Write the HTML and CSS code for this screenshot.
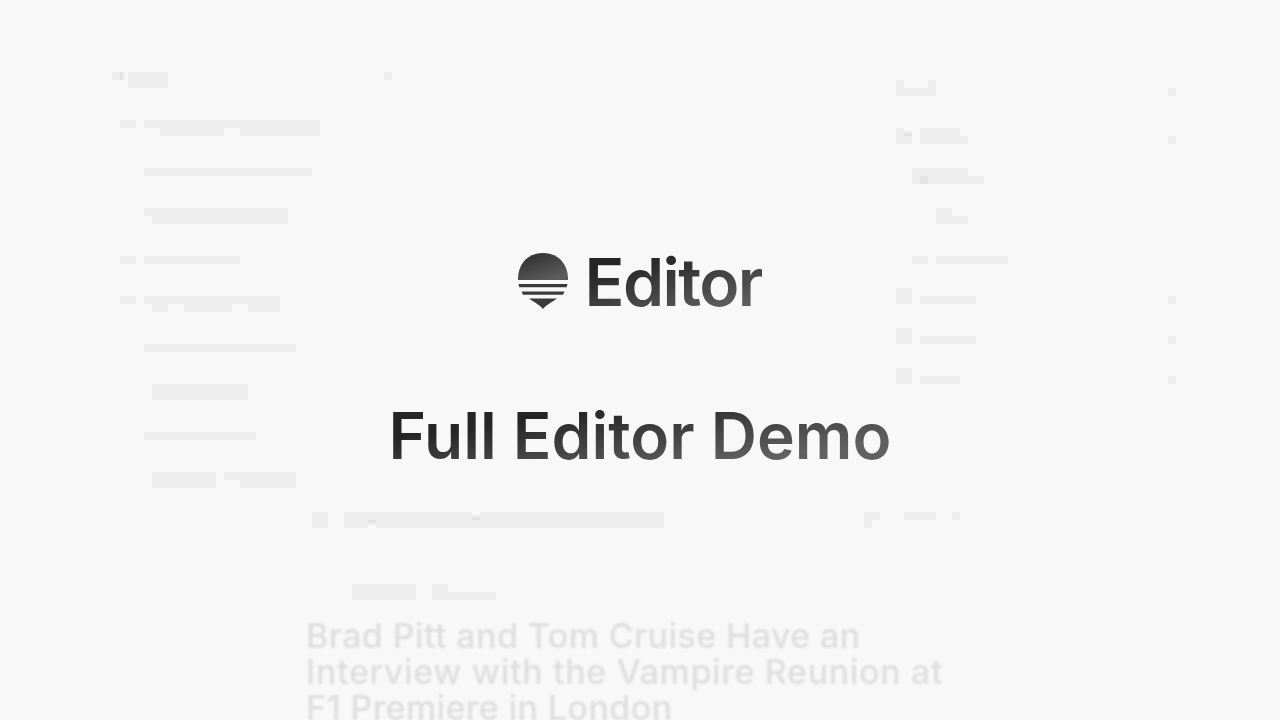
FILE: index.html
```html
<!DOCTYPE html>
<html lang="en">
<head>
<meta charset="utf-8">
<title>Full Editor Demo</title>
<link rel="stylesheet" href="styles.css">
</head>
<body>
<main class="stage">
  <div class="panels">
    <aside class="panel outline">
      <svg class="row tall" viewBox="0 0 280 48"><defs><linearGradient id="fr"><stop stop-color="#ddd"/><stop offset=".8" stop-color="#fafafa"/></linearGradient><linearGradient id="fu" x2="0" y2="1"><stop stop-color="#fdfdfd"/><stop offset="1" stop-color="#ddd"/></linearGradient><linearGradient id="fd" x2="0" y2="1"><stop stop-color="#ddd"/><stop offset="1" stop-color="#fdfdfd"/></linearGradient></defs><path d="M0 0h8v8h-8zM16 0h40v16h-40zM272 0h8v8h-8z"/><rect x="8" width="8" height="8" fill="url(#fr)"/></svg>
      <svg class="row tall" viewBox="0 0 280 48"><path d="M8 0h16v8h-16zM32 0h176v16h-80v-8h-16v8h-64v-8h-16z"/></svg>
      <svg class="row" viewBox="0 0 280 40"><path d="M32 0h168v8h-168z"/></svg>
      <svg class="row tall" viewBox="0 0 280 48"><path d="M32 0h144v16h-136v-8h-8z"/></svg>
      <svg class="row" viewBox="0 0 280 40"><path d="M8 0h16v8h-16zM32 0h96v8h-96z"/></svg>
      <svg class="row tall" viewBox="0 0 280 48"><path d="M8 0h16v8h-16zM32 0h136v16h-32v-8h-16v8h-48v-8h-16v8h-16v-8h-8z"/></svg>
      <svg class="row" viewBox="0 0 280 40"><path d="M32 0h152v8h-152z"/></svg>
      <svg class="row tall" viewBox="0 0 280 48"><path d="M40 0h96v16h-96z"/></svg>
      <svg class="row" viewBox="0 0 280 40"><path d="M32 0h112v8h-112z"/></svg>
      <svg class="row" viewBox="0 0 280 40"><path d="M40 0h64v16h-64zM112 0h72v16h-56v-8h-16z"/></svg>
    </aside>
    <aside class="panel files">
      <svg class="row tall" viewBox="0 0 280 48"><path d="M0 0h8v8h24v-8h8v16h-40zM272 8h8v8h-8z"/></svg>
      <svg class="row" viewBox="0 0 280 40"><path d="M0 0h8v8h8v8h-16zM24 0h40v8h8v8h-48zM272 8h8v8h-8z"/><rect x="8" width="8" height="8" fill="url(#fu)"/></svg>
      <svg class="row" viewBox="0 0 280 40"><path d="M16 0h56v8h16v8h-72z"/><rect class="dark" x="24" y="8" width="8" height="8"/></svg>
      <svg class="row tall" viewBox="0 0 280 48"><path d="M40 0h16v8h16v8h-32z"/></svg>
      <svg class="row short" viewBox="0 0 280 32"><path d="M16 0h16v8h-16zM40 0h72v8h-72z"/></svg>
      <svg class="row" viewBox="0 0 280 40"><path d="M0 0h16v16h-16zM24 8h56v8h-56zM272 8h8v8h-8z"/></svg>
      <svg class="row" viewBox="0 0 280 40"><path d="M0 0h16v16h-16zM24 8h56v8h-56zM272 8h8v8h-8z"/></svg>
      <svg class="row" viewBox="0 0 280 40"><path d="M0 0h16v16h-16zM24 8h40v8h-40zM272 8h8v8h-8z"/></svg>
    </aside>
  </div>
  <article class="article">
    <svg class="toolbar" viewBox="0 0 660 72"><path d="M4 0h16v16h-16zM36 0h320v16h-320zM556 0h16v8h-8v8h-8zM596 0h32v8h-32zM644 0h8v8h-8z"/><rect x="60" y="8" width="8" height="8" fill="url(#fd)"/><rect x="164" width="8" height="8" fill="url(#fu)"/></svg>
    <svg class="meta" viewBox="0 0 660 34"><path d="M44 0h64v16h-64zM124 0h16v8h48v8h-64z"/></svg>
    <h2 class="headline"><span class="l1">Brad Pitt and Tom Cruise Have an</span><span class="l2">Interview with the Vampire Reunion at</span><span class="l3">F1 Premiere in London</span></h2>
  </article>
  <header class="hero">
    <div class="brand">
      <svg class="logo" viewBox="0 0 50 56"><defs><linearGradient id="ink" gradientUnits="userSpaceOnUse" x1="18" y1="0" x2="28" y2="28"><stop stop-color="#333"/><stop offset="1" stop-color="#5c5c5c"/></linearGradient></defs><path fill="url(#ink)" d="M0 27C-.5 11 10 0 25 0S50.500 11 50 27z"/><path fill="#3a3a3a" d="M.5 31h49l-.8 3.200H1.300zM3.500 38.500h43l-1.500 3.200H5zM11 45.500h28C34.500 49 29 51 25 56C21 51 15.500 49 11 45.500z"/></svg>
      <span class="wordmark">Editor</span>
    </div>
    <h1 class="title">Full Editor Demo</h1>
  </header>
</main>
</body>
</html>
```
FILE: styles.css
```css
* { box-sizing: border-box; }
body { margin: 0; background: #f8f8f8; font-family: Inter, "Liberation Sans", sans-serif; }
.stage { position: relative; width: 1280px; height: 720px; overflow: hidden; background: #f8f8f8; }
.panels { display: flex; justify-content: space-between; height: 512px; padding: 72px 104px 0 112px; }
.panel { display: flex; flex-direction: column; width: 280px; }
.files { padding-top: 8px; }
.row { display: block; flex: none; width: 280px; height: 40px; fill: #eee; }
.tall { height: 48px; }
.short { height: 32px; }
.dark { fill: #e4e4e4; }
.article { width: 660px; margin-left: 308px; }
.toolbar, .meta { display: block; width: 660px; fill: #eee; }
.toolbar { height: 72px; }
.meta { height: 34px; }
.headline { margin: 0 0 0 -2px; color: #dedede; font-size: 34px; font-weight: 500; line-height: 36px; white-space: nowrap; }
.headline span { display: block; filter: blur(.8px); }
.l1 { letter-spacing: .4px; }
.l2 { letter-spacing: .65px; }
.l3 { letter-spacing: .4px; }
.hero { position: absolute; inset: 0; display: flex; flex-direction: column; align-items: center; padding-top: 242px; }
.brand { display: flex; align-items: center; gap: 17px; height: 80px; }
.logo { width: 50px; height: 56px; margin-top: -3px; }
.wordmark, .title { color: transparent; background-clip: text; -webkit-background-clip: text; font-weight: 600; line-height: 80px; white-space: nowrap; filter: blur(.4px); }
.wordmark { background-image: linear-gradient(165deg, #252525 25%, #5c5c5c 80%); font-size: 66px; letter-spacing: -1.600px; }
.title { background-image: linear-gradient(172deg, #252525 28%, #606060 76%); margin: 74px 0 0; font-size: 64px; }
```
